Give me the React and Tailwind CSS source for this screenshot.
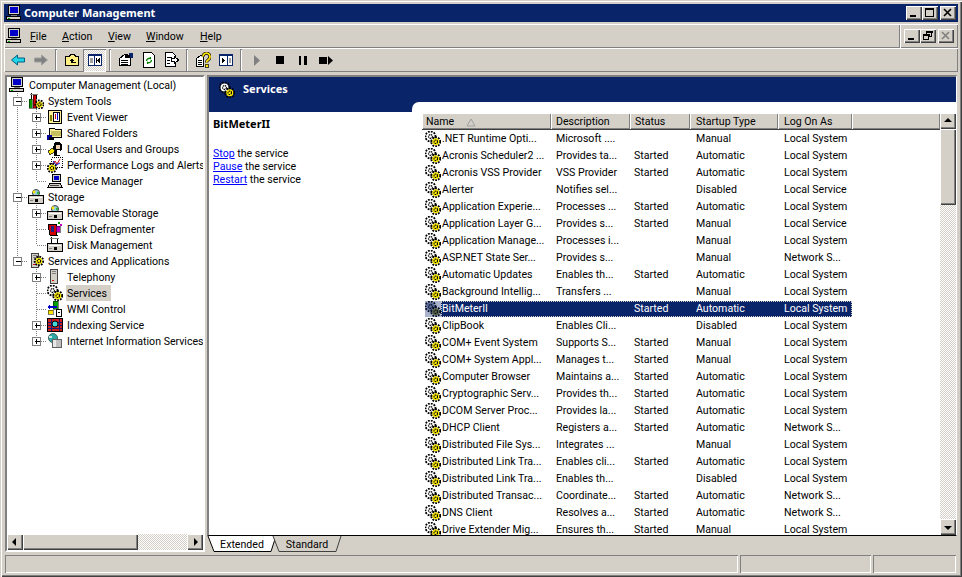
const raised = "shadow-[inset_1px_1px_0_#fff,inset_-1px_-1px_0_#404040,inset_-2px_-2px_0_#808080]";
const thinRaised = "shadow-[inset_1px_1px_0_#fff,inset_-1px_-1px_0_#808080]";
const thinSunken = "shadow-[inset_1px_1px_0_#808080,inset_-1px_-1px_0_#fff]";
const checker = "bg-[repeating-conic-gradient(#fff_0_25%,#d4d0c8_0_50%)] bg-[length:2px_2px]";
const boldFont = "font-['Noto_Sans',sans-serif] font-bold text-[11px]";

function Svg({ size = 16, children }) {
  return (
    <svg width={size} height={size} viewBox="0 0 16 16" shapeRendering="crispEdges" className="shrink-0">
      {children}
    </svg>
  );
}

function Gear({ cx, cy, r, fill }) {
  return (
    <g shapeRendering="auto">
      <circle cx={cx} cy={cy} r={r} fill="none" stroke="#000" strokeWidth="2.2" strokeDasharray="1.7 1.1" />
      <circle cx={cx} cy={cy} r={r - 0.9} fill={fill} />
      <circle cx={cx} cy={cy} r={r * 0.4} fill="none" stroke="#000" strokeWidth="1.1" strokeDasharray="1.5 0.6" />
    </g>
  );
}

function GearsIcon({ selected }) {
  return (
    <Svg>
      <Gear cx={5.5} cy={5.5} r={4.8} fill={selected ? "#8a93b5" : "#ffffff"} />
      <Gear cx={10.8} cy={10.8} r={4.4} fill={selected ? "#8a8a30" : "#ffee00"} />
      {selected && <rect width="16" height="16" fill="#0a246a" opacity="0.35" />}
    </Svg>
  );
}

function ComputerIcon() {
  return (
    <Svg>
      <rect x="2.5" y="0.5" width="11" height="9" fill="#d4d0c8" stroke="#000" />
      <rect x="4" y="2" width="8" height="6" fill="#0000c8" />
      <rect x="5" y="10" width="6" height="1" fill="#808080" />
      <rect x="0.5" y="11.5" width="14" height="3" fill="#d4d0c8" stroke="#000" />
      <rect x="2" y="13" width="2" height="1" fill="#00a000" />
    </Svg>
  );
}

function TowerIcon({ gear }) {
  return (
    <Svg>
      <rect x="3.5" y="0.5" width="7" height="14" fill="#d4d0c8" stroke="#404040" />
      <rect x="5" y="2" width="4" height="1" fill="#808080" />
      <rect x="5" y="4" width="4" height="1" fill="#808080" />
      <rect x="5" y="11" width="2" height="1" fill="#d00000" />
      {gear && <Gear cx={11} cy={8} r={4.2} fill="#ffee00" />}
    </Svg>
  );
}

function TreeIcon({ name }) {
  if (name === "computer") return <ComputerIcon />;
  if (name === "gears") return <GearsIcon />;
  if (name === "server") return <TowerIcon gear />;
  if (name === "tower") return <TowerIcon />;
  if (name === "tools")
    return (
      <Svg>
        <rect x="1" y="6" width="3" height="9" fill="#00a000" stroke="#000" strokeWidth="0.5" />
        <rect x="5" y="2" width="3" height="13" fill="#d00000" stroke="#000" strokeWidth="0.5" />
        <rect x="3" y="0" width="1" height="6" fill="#000" />
        <rect x="8" y="1" width="1" height="5" fill="#000" />
        <rect x="2" y="1" width="8" height="1" fill="#808080" />
        <Gear cx={11.5} cy={11.5} r={4} fill="#ffee00" />
      </Svg>
    );
  if (name === "event")
    return (
      <Svg>
        <rect x="1.5" y="1.5" width="13" height="13" fill="#ffef9c" stroke="#000" />
        <rect x="6.5" y="3.5" width="6" height="9" fill="#fff" stroke="#000" />
        <rect x="8" y="5" width="1" height="5" fill="#d00000" />
        <rect x="10" y="4" width="1" height="7" fill="#0000c8" />
        <rect x="3" y="6" width="2" height="6" fill="#808000" />
      </Svg>
    );
  if (name === "share")
    return (
      <Svg>
        <path d="M2 3h5l1 1h6v8H2z" fill="#ffef9c" stroke="#000" />
        <rect x="4" y="6" width="10" height="5" fill="#c8c060" />
        <rect x="0" y="10" width="5" height="5" fill="#0000a0" />
        <rect x="2" y="12" width="5" height="3" fill="#000" />
      </Svg>
    );
  if (name === "users")
    return (
      <Svg>
        <path d="M8 1h5l2 3v4l-2 2v5H7V9L6 6z" fill="#000" />
        <rect x="9" y="4" width="4" height="4" fill="#f4d0b0" />
        <rect x="10" y="9" width="3" height="5" fill="#fff" />
        <path d="M1 10l5-3 2 3-5 4z" fill="#ffe600" stroke="#000" strokeWidth="0.7" />
      </Svg>
    );
  if (name === "perf")
    return (
      <Svg>
        <rect x="4.5" y="0.5" width="11" height="10" fill="#fff" stroke="#000" strokeDasharray="1 1" />
        <path d="M6 7l2-3 2 3 3-5" fill="none" stroke="#d00000" shapeRendering="auto" />
        <path d="M6 4l3 4 4-2" fill="none" stroke="#0000c8" shapeRendering="auto" />
        <Gear cx={5} cy={11} r={4.2} fill="#ffee00" />
      </Svg>
    );
  if (name === "device")
    return (
      <Svg>
        <rect x="5.5" y="1.5" width="8" height="7" fill="#d4d0c8" stroke="#000" />
        <rect x="7" y="3" width="5" height="4" fill="#0000c8" />
        <path d="M3 10h10l2 4H1z" fill="#d4d0c8" stroke="#000" />
        <rect x="3" y="12" width="9" height="1" fill="#404040" />
      </Svg>
    );
  if (name === "storage" || name === "removable" || name === "disk")
    return (
      <Svg>
        {name === "disk" ? (
          <>
            <rect x="4" y="0" width="1" height="6" fill="#000" />
            <rect x="10" y="1" width="1" height="5" fill="#000" />
            <rect x="3" y="1" width="9" height="1" fill="#808080" />
          </>
        ) : (
          <g shapeRendering="auto">
            <circle cx="8" cy="4" r="3.5" fill="#9ad0e0" stroke="#404040" />
            <circle cx="6" cy="3" r="1.4" fill="#ffe600" />
            <circle cx="10" cy="4" r="1.2" fill="#30b040" />
          </g>
        )}
        <rect x="0.5" y="6.5" width="15" height="8" fill="#d4d0c8" stroke="#000" />
        <rect x="2" y="8" width="12" height="1" fill="#fff" />
        <rect x="7" y="10" width="3" height="3" fill="#000" />
        <rect x="2" y="11" width="3" height="1" fill="#808080" />
      </Svg>
    );
  if (name === "defrag")
    return (
      <Svg>
        <path d="M1 3h8l1 11H3z" fill="#d00000" stroke="#000" />
        <rect x="4" y="5" width="3" height="6" fill="#202080" />
        <rect x="9" y="5" width="4" height="6" fill="#c000c0" stroke="#000" strokeWidth="0.5" />
        <rect x="11" y="1" width="2" height="2" fill="#00a000" />
        <rect x="13" y="3" width="2" height="2" fill="#c000c0" />
      </Svg>
    );
  if (name === "wmi")
    return (
      <Svg>
        <rect x="6" y="0" width="5" height="8" fill="#00a000" stroke="#000" strokeWidth="0.5" />
        <rect x="1" y="5" width="9" height="2" fill="#0000c8" />
        <path d="M0 6l3-3v6z" fill="#0000c8" />
        <rect x="1" y="9" width="5" height="4" fill="#ffe600" stroke="#000" strokeWidth="0.5" />
        <rect x="9.5" y="8.5" width="5" height="7" fill="#fff" stroke="#000" />
        <rect x="11" y="11" width="2" height="1" fill="#000" />
      </Svg>
    );
  if (name === "index")
    return (
      <Svg>
        <rect x="0.5" y="1.5" width="15" height="13" fill="#d02020" stroke="#000" />
        <path d="M1 5h14M1 8h14M1 11h14M4 2v12M12 2v12" stroke="#1a1a70" />
        <circle cx="8" cy="7" r="3" fill="#40d8d8" stroke="#000" shapeRendering="auto" />
      </Svg>
    );
  return (
    <Svg>
      <circle cx="6" cy="5" r="4.5" fill="#30a8a8" stroke="#406060" shapeRendering="auto" />
      <rect x="2" y="3" width="3" height="2" fill="#c8e8e8" />
      <rect x="5.5" y="6.5" width="9" height="8" fill="#c0c0c0" stroke="#606060" />
      <rect x="6" y="7" width="3" height="7" fill="#e8e8e8" />
    </Svg>
  );
}

const tree = [
  { level: 0, label: "Computer Management (Local)", icon: "computer" },
  { level: 1, label: "System Tools", icon: "tools", box: "-" },
  { level: 2, label: "Event Viewer", icon: "event", box: "+" },
  { level: 2, label: "Shared Folders", icon: "share", box: "+" },
  { level: 2, label: "Local Users and Groups", icon: "users", box: "+" },
  { level: 2, label: "Performance Logs and Alerts", icon: "perf", box: "+" },
  { level: 2, label: "Device Manager", icon: "device", last: true },
  { level: 1, label: "Storage", icon: "storage", box: "-" },
  { level: 2, label: "Removable Storage", icon: "removable", box: "+" },
  { level: 2, label: "Disk Defragmenter", icon: "defrag" },
  { level: 2, label: "Disk Management", icon: "disk", last: true },
  { level: 1, label: "Services and Applications", icon: "server", box: "-", last: true },
  { level: 2, label: "Telephony", icon: "tower", box: "+", parentLast: true },
  { level: 2, label: "Services", icon: "gears", parentLast: true, active: true },
  { level: 2, label: "WMI Control", icon: "wmi", parentLast: true },
  { level: 2, label: "Indexing Service", icon: "index", box: "+", parentLast: true },
  { level: 2, label: "Internet Information Services", icon: "iis", box: "+", parentLast: true, last: true },
];

function Connector({ row }) {
  if (row.level === 0) return null;
  const x = row.level === 1 ? 8.5 : 27.5;
  return (
    <svg width={19 * row.level} height="16" shapeRendering="crispEdges" className="shrink-0">
      <g stroke="#808080" strokeDasharray="1 1">
        {row.level === 2 && !row.parentLast && <line x1="8.5" x2="8.5" y1="0" y2="16" />}
        <line x1={x} x2={x} y1="0" y2={row.last ? 8 : 16} />
        <line x1={x} x2={x + 10} y1="8.5" y2="8.5" />
      </g>
      {row.box && (
        <g>
          <rect x={x - 4} y="4.5" width="8" height="8" fill="#fff" stroke="#808080" />
          <line x1={x - 2} x2={x + 3} y1="8.5" y2="8.5" stroke="#000" />
          {row.box === "+" && <line x1={x} x2={x} y1="6" y2="11" stroke="#000" />}
        </g>
      )}
    </svg>
  );
}

const services = [
  [".NET Runtime Opti...", "Microsoft ....", "", "Manual", "Local System"],
  ["Acronis Scheduler2 ...", "Provides ta...", "Started", "Automatic", "Local System"],
  ["Acronis VSS Provider", "VSS Provider", "Started", "Automatic", "Local System"],
  ["Alerter", "Notifies sel...", "", "Disabled", "Local Service"],
  ["Application Experie...", "Processes ...", "Started", "Automatic", "Local System"],
  ["Application Layer G...", "Provides s...", "Started", "Manual", "Local Service"],
  ["Application Manage...", "Processes i...", "", "Manual", "Local System"],
  ["ASP.NET State Ser...", "Provides s...", "", "Manual", "Network S..."],
  ["Automatic Updates", "Enables th...", "Started", "Automatic", "Local System"],
  ["Background Intellig...", "Transfers ...", "", "Manual", "Local System"],
  ["BitMeterII", "", "Started", "Automatic", "Local System"],
  ["ClipBook", "Enables Cli...", "", "Disabled", "Local System"],
  ["COM+ Event System", "Supports S...", "Started", "Manual", "Local System"],
  ["COM+ System Appl...", "Manages t...", "Started", "Manual", "Local System"],
  ["Computer Browser", "Maintains a...", "Started", "Automatic", "Local System"],
  ["Cryptographic Serv...", "Provides th...", "Started", "Automatic", "Local System"],
  ["DCOM Server Proc...", "Provides la...", "Started", "Automatic", "Local System"],
  ["DHCP Client", "Registers a...", "Started", "Automatic", "Network S..."],
  ["Distributed File Sys...", "Integrates ...", "", "Manual", "Local System"],
  ["Distributed Link Tra...", "Enables cli...", "Started", "Automatic", "Local System"],
  ["Distributed Link Tra...", "Enables th...", "", "Disabled", "Local System"],
  ["Distributed Transac...", "Coordinate...", "Started", "Automatic", "Network S..."],
  ["DNS Client", "Resolves a...", "Started", "Automatic", "Network S..."],
  ["Drive Extender Mig...", "Ensures th...", "Started", "Manual", "Local System"],
];

function WinButton({ kind, disabled, className }) {
  const color = disabled ? "#808080" : "#000";
  return (
    <div className={`w-[16px] h-[14px] bg-[#d4d0c8] flex items-center justify-center ${raised} ${className || ""}`}>
      <svg width="16" height="14" shapeRendering="crispEdges">
        {kind === "min" && <rect x="4" y="9" width="6" height="2" fill={color} />}
        {kind === "max" && <rect x="3.5" y="2.5" width="8" height="8" fill="none" stroke={color} />}
        {kind === "max" && <rect x="3" y="2" width="9" height="2" fill={color} />}
        {kind === "close" && (
          <path d="M4 3l7 7M11 3l-7 7" stroke={color} strokeWidth="1.6" fill="none" shapeRendering="auto" />
        )}
        {kind === "restore" && (
          <g fill="none" stroke={color}>
            <rect x="6.5" y="2.5" width="5" height="5" />
            <rect x="3.5" y="5.5" width="5" height="5" fill="#d4d0c8" />
            <rect x="6" y="2" width="6" height="1" fill={color} />
            <rect x="3" y="5" width="6" height="1" fill={color} />
          </g>
        )}
      </svg>
    </div>
  );
}

function MenuItem({ first, rest, className }) {
  return (
    <span className={`pt-[2px] ${className}`}>
      <span className="underline">{first}</span>
      {rest}
    </span>
  );
}

function ToolButton({ pressed, children }) {
  return (
    <div
      className={`w-[23px] h-[23px] flex items-center justify-center ${
        pressed ? `${checker} ${thinSunken}` : ""
      }`}
    >
      {children}
    </div>
  );
}

function ToolSep() {
  return <div className={`w-[2px] h-[22px] mx-[3px] ${thinSunken}`} />;
}

function ScrollButton({ dir }) {
  const paths = {
    up: "M8 5l-4 4h8z",
    down: "M8 11l-4-4h8z",
    left: "M5 8l4-4v8z",
    right: "M11 8l-4-4v8z",
  };
  return (
    <div className={`w-[16px] h-[16px] shrink-0 bg-[#d4d0c8] ${raised}`}>
      <svg width="16" height="16" viewBox="0 0 16 16">
        <path d={paths[dir]} fill="#000" />
      </svg>
    </div>
  );
}

function HeaderCell({ className, children }) {
  return (
    <div className={`h-[17px] shrink-0 flex items-center pt-[2px] bg-[#d4d0c8] ${thinRaised} border-b border-[#404040] ${className}`}>
      {children}
    </div>
  );
}

function ServiceRow({ cells, selected }) {
  return (
    <div className="h-[17px] flex items-center shrink-0 w-[430px]">
      <div className="w-[19px] pl-[3px] shrink-0">
        <GearsIcon selected={selected} />
      </div>
      <div
        className={`flex items-center h-[16px] w-[411px] pt-[1px] ${
          selected ? "bg-[#0a246a] text-white outline outline-1 outline-dotted outline-offset-[-1px] outline-[#d4d0c8]" : ""
        }`}
      >
        <div className="w-[115px] pl-[1px] whitespace-nowrap">{cells[0]}</div>
        <div className="w-[78px] whitespace-nowrap">{cells[1]}</div>
        <div className="w-[62px] whitespace-nowrap">{cells[2]}</div>
        <div className="w-[88px] whitespace-nowrap">{cells[3]}</div>
        <div className="whitespace-nowrap">{cells[4]}</div>
      </div>
    </div>
  );
}

function Toolbar() {
  return (
    <div className={`h-[24px] flex items-center pl-[2px] ${thinRaised}`}>
      <ToolButton>
        <svg width="14" height="12" viewBox="0 0 14 12">
          <path d="M0.5 6l6-5v3h7v4h-7v3z" fill="#22d4e8" stroke="#006080" />
        </svg>
      </ToolButton>
      <ToolButton>
        <svg width="14" height="12" viewBox="0 0 14 12">
          <path d="M13.5 6l-6-5v3h-7v4h7v3z" fill="#808080" stroke="#a0a0a0" />
        </svg>
      </ToolButton>
      <ToolSep />
      <ToolButton>
        <Svg>
          <path d="M1.5 4.5h4l1-2h4l1 2h3v9h-13z" fill="#ffef80" stroke="#000" />
          <path d="M8 6l-3 3h2v2h5v-1.5H8.500V9h2z" fill="#000" />
        </Svg>
      </ToolButton>
      <ToolButton pressed>
        <Svg>
          <rect x="1.5" y="2.5" width="13" height="11" fill="#fff" stroke="#0a246a" />
          <rect x="1" y="2" width="14" height="2" fill="#0a246a" />
          <rect x="7" y="3" width="1" height="10" fill="#0a246a" />
          <path d="M13 6v5l-3-2.500z" fill="#000" />
          <rect x="9" y="6" width="1" height="5" fill="#000" />
          <rect x="3" y="6" width="3" height="5" fill="#a0a0a0" />
        </Svg>
      </ToolButton>
      <ToolSep />
      <ToolButton>
        <Svg>
          <path d="M1.500 6.500l5-4h3l3 2v9h-11z" fill="#fff" stroke="#000" />
          <path d="M3 8h7M3 10h7M3 12h7" stroke="#000" />
          <rect x="11" y="1" width="4" height="5" fill="#0a246a" />
          <rect x="7" y="3" width="5" height="3" fill="#000" />
        </Svg>
      </ToolButton>
      <ToolButton>
        <Svg>
          <path d="M2.500 0.500h8l3 3v12h-11z" fill="#fff" stroke="#000" />
          <path d="M5.500 9a2.700 2.700 0 0 1 4.500-2M10.500 8a2.700 2.700 0 0 1-4.500 2" fill="none" stroke="#008000" strokeWidth="1.300" shapeRendering="auto" />
          <path d="M10 4v3H7.500zM6 12V9.500h2.500z" fill="#008000" />
        </Svg>
      </ToolButton>
      <ToolButton>
        <Svg>
          <path d="M1.500 0.500h7l3 3v11h-10z" fill="#fff" stroke="#000" />
          <path d="M3 5h5M3 8h3M3 11h3" stroke="#000" />
          <path d="M7.500 6.500h3v-2l4 3.500-4 3.500v-2h-3z" fill="#fff" stroke="#000" />
        </Svg>
      </ToolButton>
      <ToolSep />
      <ToolButton>
        <Svg>
          <path d="M1.500 6.500l4-3h3v11h-7z" fill="#fff" stroke="#000" />
          <path d="M3 8h4M3 10h4M3 12h4" stroke="#000" />
          <path d="M8 4.500a3.500 3.500 0 1 1 5.500 3c-1.500 1-2 1.500-2 3" fill="none" stroke="#000" strokeWidth="3.200" shapeRendering="auto" />
          <path d="M8 4.500a3.500 3.500 0 1 1 5.500 3c-1.500 1-2 1.500-2 3" fill="none" stroke="#ffe600" strokeWidth="1.800" shapeRendering="auto" />
          <rect x="10" y="12" width="3" height="3" fill="#ffe600" stroke="#000" strokeWidth="0.700" />
        </Svg>
      </ToolButton>
      <ToolButton>
        <Svg>
          <rect x="1.500" y="2.500" width="13" height="11" fill="#fff" stroke="#0a246a" />
          <rect x="1" y="2" width="14" height="2" fill="#0a246a" />
          <rect x="9" y="3" width="1" height="10" fill="#0a246a" />
          <path d="M4 6v5l3-2.500z" fill="#000" />
          <rect x="11" y="6" width="2" height="5" fill="#a0a0a0" />
        </Svg>
      </ToolButton>
      <ToolSep />
      <ToolButton>
        <svg width="8" height="11" viewBox="0 0 8 11">
          <path d="M1 0l6 5.500-6 5.500z" fill="#808080" />
        </svg>
      </ToolButton>
      <ToolButton>
        <div className="w-[8px] h-[8px] bg-black" />
      </ToolButton>
      <ToolButton>
        <div className="flex gap-[3px]">
          <div className="w-[2px] h-[9px] bg-black" />
          <div className="w-[3px] h-[9px] bg-black" />
        </div>
      </ToolButton>
      <ToolButton>
        <svg width="14" height="9" viewBox="0 0 14 9" shapeRendering="crispEdges">
          <rect x="0" y="1" width="8" height="7" fill="#000" />
          <path d="M9 0l5 4.500-5 4.500z" fill="#000" shapeRendering="auto" />
        </svg>
      </ToolButton>
    </div>
  );
}

function Tab({ label, active }) {
  return (
    <div className="relative h-[16px] w-[70px] flex items-center justify-center pt-[3px] -mr-[5px]">
      <svg width="70" height="16" viewBox="0 0 70 16" className="absolute inset-0">
        <path
          d="M1 0l6 15.500h57L69 0"
          fill={active ? "#fff" : "#d4d0c8"}
          stroke={active ? "#000" : "#404040"}
        />
      </svg>
      <span className="relative">{label}</span>
    </div>
  );
}

export default function App() {
  return (
    <div className="w-[962px] h-[577px] overflow-hidden bg-[#d4d0c8] p-[4px] text-[10.6px] leading-none text-black font-['Roboto',sans-serif] shadow-[inset_1px_1px_0_#d4d0c8,inset_2px_2px_0_#fff,inset_-1px_-1px_0_#404040,inset_-2px_-2px_0_#808080] flex flex-col">
      {/* Title bar */}
      <div className="h-[18px] shrink-0 bg-[#0a246a] flex items-center pl-[2px] pr-[2px] text-white">
        <ComputerIcon />
        <span className={`ml-[2px] flex-1 pb-[2px] ${boldFont}`}>Computer Management</span>
        <WinButton kind="min" />
        <WinButton kind="max" />
        <WinButton kind="close" className="ml-[2px]" />
      </div>

      {/* Menu bar */}
      <div className="h-[24px] shrink-0 mt-[2px] flex">
        <div className={`w-[896px] flex items-center pl-[2px] ${thinRaised}`}>
          <ComputerIcon />
          <MenuItem first="F" rest="ile" className="ml-[8px] w-[32px]" />
          <MenuItem first="A" rest="ction" className="w-[46px]" />
          <MenuItem first="V" rest="iew" className="w-[38px]" />
          <MenuItem first="W" rest="indow" className="w-[54px]" />
          <MenuItem first="H" rest="elp" />
        </div>
        <div className={`flex-1 flex items-center pl-[4px] ${thinRaised}`}>
          <WinButton kind="min" />
          <WinButton kind="restore" />
          <WinButton kind="close" disabled className="ml-[2px]" />
        </div>
      </div>

      <Toolbar />

      {/* Main area */}
      <div className="h-[477px] shrink-0 mt-[3px] flex ml-[1px] mr-[1px]">
        {/* Tree */}
        <div className="w-[200px] shrink-0 border-2 border-t-[#808080] border-l-[#808080] border-r-white border-b-white bg-white flex flex-col">
          <div className="flex-1 min-h-0 overflow-hidden pl-[2px] pt-0">
            {tree.map((row, i) => (
              <div key={i} className="h-[16px] flex items-center whitespace-nowrap">
                <Connector row={row} />
                <TreeIcon name={row.icon} />
                <span className={`ml-[3px] pl-[1px] pr-[4px] h-[16px] pt-[2px] flex items-center ${row.active ? "bg-[#d4d0c8]" : ""}`}>
                  {row.label}
                </span>
              </div>
            ))}
          </div>
          <div className="h-[16px] shrink-0 flex">
            <ScrollButton dir="left" />
            <div className={`w-[115px] h-[16px] bg-[#d4d0c8] ${raised}`} />
            <div className={`flex-1 ${checker}`} />
            <ScrollButton dir="right" />
          </div>
        </div>

        {/* Right pane */}
        <div className="w-[750px] ml-[2px] shrink-0 flex flex-col">
          <div className="flex-1 min-h-0 flex flex-col border-t-2 border-l-2 border-[#808080] border-r border-r-white border-b border-b-black">
            <div className="h-[25px] shrink-0 bg-[#0a246a] flex items-center pl-[10px] text-white">
              <GearsIcon />
              <span className={`ml-[8px] pb-[2px] ${boldFont}`}>Services</span>
            </div>
            <div className="flex-1 min-h-0 flex bg-[#0a246a]">
              <div className="w-[203px] shrink-0 mt-[10px] bg-white pl-[4px]">
                <div className={`mt-[6px] ${boldFont}`}>BitMeterII</div>
                <div className="mt-[18px] leading-[13px]">
                  <div><span className="text-[#0000ff] underline">Stop</span> the service</div>
                  <div><span className="text-[#0000ff] underline">Pause</span> the service</div>
                  <div><span className="text-[#0000ff] underline">Restart</span> the service</div>
                </div>
              </div>
              <div className="flex-1 min-w-0 bg-white rounded-tl-[7px] pl-[10px] pt-[11px] flex">
                <div className="flex-1 min-w-0 flex flex-col overflow-hidden">
                  <div className="flex shrink-0">
                    <HeaderCell className="w-[129px] pl-[4px]">
                      Name
                      <svg width="10" height="9" viewBox="0 0 10 9" className="ml-[12px]">
                        <path d="M5 1l4 7H1z" fill="none" stroke="#a0a0a0" />
                      </svg>
                    </HeaderCell>
                    <HeaderCell className="w-[79px] pl-[5px]">Description</HeaderCell>
                    <HeaderCell className="w-[60px] pl-[5px]">Status</HeaderCell>
                    <HeaderCell className="w-[88px] pl-[6px]">Startup Type</HeaderCell>
                    <HeaderCell className="w-[74px] pl-[6px]">Log On As</HeaderCell>
                    <HeaderCell className="flex-1" />
                  </div>
                  <div className="flex-1 min-h-0 overflow-hidden">
                    {services.map((row, i) => (
                      <ServiceRow key={i} cells={row} selected={row[0] === "BitMeterII"} />
                    ))}
                  </div>
                </div>
                <div className="w-[16px] shrink-0 flex flex-col">
                  <ScrollButton dir="up" />
                  <div className={`h-[76px] shrink-0 bg-[#d4d0c8] ${raised}`} />
                  <div className={`flex-1 ${checker}`} />
                  <ScrollButton dir="down" />
                </div>
              </div>
            </div>
          </div>

          {/* Tabs */}
          <div className="h-[16px] shrink-0 flex">
            <Tab label="Extended" active />
            <Tab label="Standard" />
          </div>
        </div>
      </div>

      {/* Status bar */}
      <div className="h-[18px] shrink-0 mt-[3px] flex gap-[2px] ml-[1px] mr-[2px]">
        <div className={`w-[733px] ${thinSunken}`} />
        <div className={`w-[131px] ${thinSunken}`} />
        <div className={`flex-1 ${thinSunken}`} />
      </div>
    </div>
  );
}
